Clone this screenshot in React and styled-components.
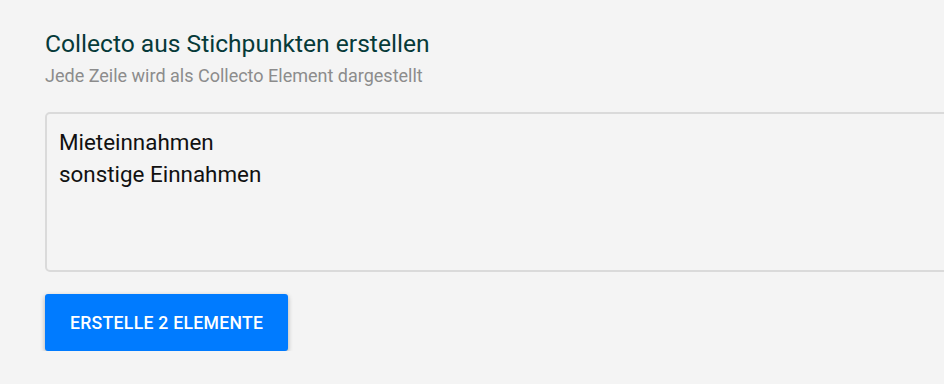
import React, { useState } from "react";
import styled, { createGlobalStyle } from "styled-components";

const Global = createGlobalStyle`
  html, body {
    margin: 0;
    padding: 0;
    background: #f4f4f4;
    overflow: hidden;
  }
  body {
    font-family: Roboto, "Liberation Sans", sans-serif;
  }
`;

const Page = styled.div`
  box-sizing: border-box;
  width: 100vw;
  padding: 28px 0 0 45px;
  overflow: hidden;
`;

const Title = styled.h2`
  margin: 0;
  font-size: 24.6px;
  line-height: 32px;
  font-weight: 400;
  color: #063a39;
`;

const Subtitle = styled.p`
  margin: 5px 0 0;
  font-size: 18px;
  line-height: 22px;
  color: #8c8c8c;
`;

const Input = styled.textarea`
  display: block;
  box-sizing: border-box;
  margin-top: 25px;
  width: calc(100% + 40px);
  height: 160px;
  padding: 12px 12px 10px;
  border: 2px solid #dadada;
  border-radius: 5px;
  background: #f4f4f4;
  font-family: Roboto, "Liberation Sans", sans-serif;
  font-size: 22.4px;
  line-height: 32px;
  color: #111;
  resize: none;
  outline: none;
`;

const Button = styled.button`
  margin-top: 22px;
  height: 57px;
  padding: 0 25px;
  border: none;
  border-radius: 3px;
  background: #007bff;
  color: #fff;
  font-family: Roboto, "Liberation Sans", sans-serif;
  font-size: 17.6px;
  font-weight: 500;
  letter-spacing: 0.3px;
  text-transform: uppercase;
  box-shadow: 0 2px 5px rgba(0, 0, 0, 0.3);
  cursor: pointer;
`;

export default function App() {
  const [text, setText] = useState("Mieteinnahmen\nsonstige Einnahmen");
  const count = text.split("\n").filter((l) => l.trim()).length;
  return (
    <>
      <Global />
      <Page>
        <Title>Collecto aus Stichpunkten erstellen</Title>
        <Subtitle>Jede Zeile wird als Collecto Element dargestellt</Subtitle>
        <Input value={text} onChange={(e) => setText(e.target.value)} />
        <Button>Erstelle {count} Elemente</Button>
      </Page>
    </>
  );
}
